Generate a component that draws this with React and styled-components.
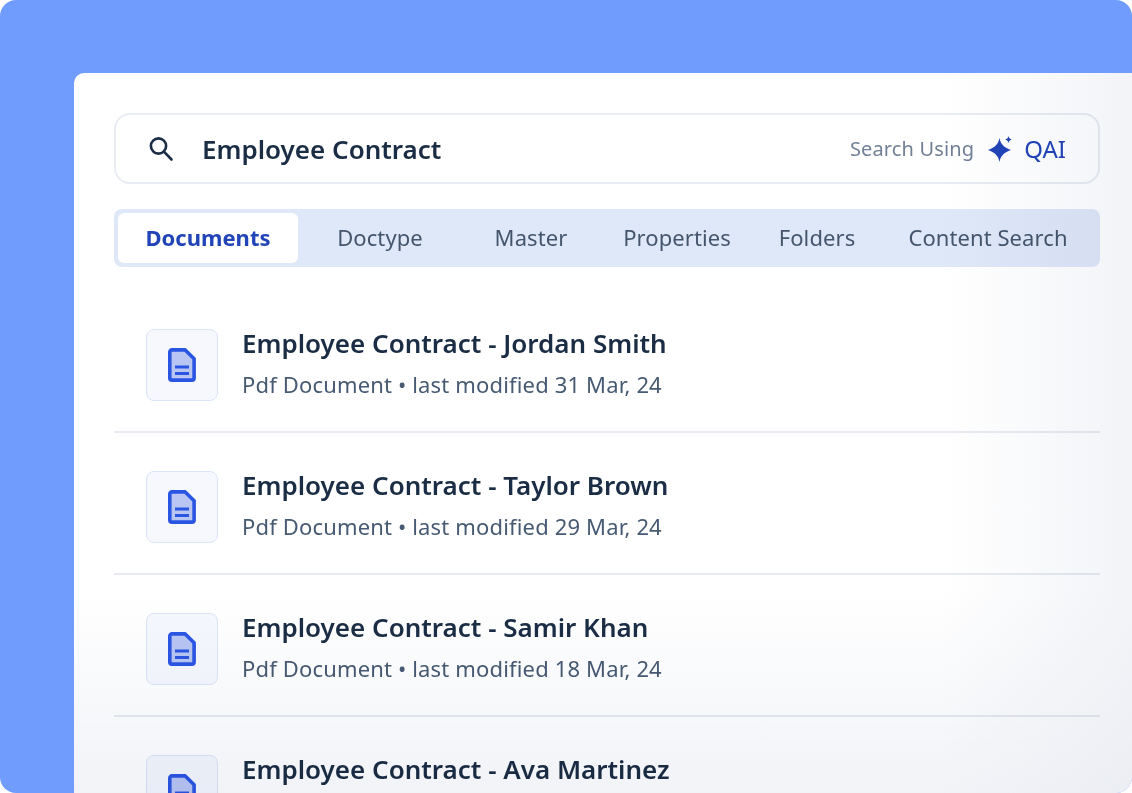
import React from 'react';
import styled, { createGlobalStyle } from 'styled-components';

const GlobalStyle = createGlobalStyle`
  html, body {
    margin: 0;
    padding: 0;
    background: #ffffff;
    overflow: hidden;
  }
  * {
    box-sizing: border-box;
  }
`;

const Backdrop = styled.div`
  width: 1132px;
  height: 793px;
  padding: 73px 0 0 74px;
  background: #709dfd;
  border-radius: 16px;
  overflow: hidden;
  font-family: 'Noto Sans', sans-serif;
`;

const Panel = styled.div`
  position: relative;
  height: 720px;
  padding: 40px 32px 0 40px;
  background: #ffffff;
  border-radius: 10px 0 0 0;
  overflow: hidden;

  /* soft grey fade along the right and bottom edges, multiplied so text stays dark */
  &::after {
    content: '';
    position: absolute;
    inset: 0;
    pointer-events: none;
    mix-blend-mode: multiply;
    background:
      linear-gradient(to right, rgba(230, 233, 240, 0) 82%, rgba(230, 233, 240, 0.5) 100%),
      linear-gradient(to bottom, rgba(230, 233, 240, 0) 72%, rgba(230, 233, 240, 0.55) 100%);
  }
`;

const SearchBar = styled.div`
  display: flex;
  align-items: center;
  height: 71px;
  padding: 0 32px;
  border: 2px solid #e9ecf2;
  border-radius: 16px;
`;

const Query = styled.span`
  flex: 1;
  margin-left: 28px;
  font-size: 26px;
  font-weight: 600;
  color: #1a2d44;
`;

const SearchUsing = styled.span`
  font-size: 20px;
  letter-spacing: 0.15px;
  color: #718096;
`;

const Sparkle = styled.svg`
  margin: 0 12px 0 14px;
`;

const Qai = styled.span`
  font-size: 24px;
  color: #2144b8;
`;

const Tabs = styled.div`
  display: flex;
  height: 58px;
  margin-top: 25px;
  padding: 4px;
  border-radius: 8px;
  background: #dfe8f8;
`;

const Tab = styled.div`
  display: flex;
  align-items: center;
  justify-content: center;
  flex: 0 0 ${(p) => p.$width}px;
  padding-bottom: 2px;
  border-radius: 6px;
  font-size: 22px;
  letter-spacing: ${(p) => (p.$active ? '0' : '0.08px')};
  font-weight: ${(p) => (p.$active ? 700 : 400)};
  color: ${(p) => (p.$active ? '#2144b8' : '#44556d')};
  background: ${(p) => (p.$active ? '#ffffff' : 'transparent')};
`;

const List = styled.div`
  margin-top: 24px;
`;

const Row = styled.div`
  display: flex;
  align-items: flex-start;
  height: 142px;
  padding: 38px 32px 0;
  border-bottom: 2px solid #e8ebf1;
`;

const IconBox = styled.div`
  display: flex;
  align-items: center;
  justify-content: center;
  flex: 0 0 72px;
  height: 72px;
  border: 1px solid #dbe5f8;
  border-radius: 8px;
  background: #f6f8fe;
`;

const RowText = styled.div`
  margin-left: 24px;
`;

const Title = styled.div`
  margin-top: -4px;
  font-size: 26px;
  line-height: 36px;
  font-weight: 600;
  color: #1a2d44;
`;

const Meta = styled.div`
  margin-top: 8px;
  font-size: 22px;
  line-height: 30px;
  font-weight: 420;
  letter-spacing: 0.16px;
  color: #475a73;
`;

const SearchIcon = () => (
  <svg width="26" height="26" viewBox="0 0 26 26" fill="none" stroke="#1a2d44" strokeWidth="2.6" strokeLinecap="round">
    <circle cx="10.5" cy="10" r="7.6" />
    <path d="M16.2 15.8 L23.5 23.5" />
  </svg>
);

const SparkleIcon = () => (
  <Sparkle width="24" height="26" viewBox="0 0 24 26" fill="#2144b8">
    <path d="M11.5 2 C12.8 8.4 15.6 11.2 23 14 C15.6 16.8 12.8 19.6 11.5 26 C10.2 19.6 7.4 16.8 0 14 C7.4 11.2 10.2 8.4 11.5 2 Z" />
    <path d="M20.5 0 C20.9 2 21.7 2.8 24 3.6 C21.7 4.4 20.9 5.2 20.5 7.2 C20.1 5.2 19.3 4.4 17 3.6 C19.3 2.8 20.1 2 20.5 0 Z" />
  </Sparkle>
);

const DocIcon = () => (
  <svg width="28" height="34" viewBox="0 0 28 34">
    <path
      d="M4 1.9 H17.2 L26.1 10.8 V29.9 A2.2 2.2 0 0 1 23.9 32.1 H4 A2.2 2.2 0 0 1 1.8 29.9 V4.1 A2.2 2.2 0 0 1 4 1.9 Z"
      fill="#b9c6f4"
      stroke="#2a55e3"
      strokeWidth="3.6"
      strokeLinejoin="round"
    />
    <path d="M7 19 H21 M7 25.4 H21" stroke="#2a55e3" strokeWidth="3" />
  </svg>
);

const tabs = [
  { label: 'Documents', width: 180, active: true },
  { label: 'Doctype', width: 164 },
  { label: 'Master', width: 138 },
  { label: 'Properties', width: 154 },
  { label: 'Folders', width: 126 },
  { label: 'Content Search', width: 216 },
];

// the last row runs off the bottom of the picture, only its title shows
const results = [
  { name: 'Jordan Smith', date: '31 Mar, 24' },
  { name: 'Taylor Brown', date: '29 Mar, 24' },
  { name: 'Samir Khan', date: '18 Mar, 24' },
  { name: 'Ava Martinez' },
];

export default function App() {
  return (
    <>
      <GlobalStyle />
      <Backdrop>
        <Panel>
          <SearchBar>
            <SearchIcon />
            <Query>Employee Contract</Query>
            <SearchUsing>Search Using</SearchUsing>
            <SparkleIcon />
            <Qai>QAI</Qai>
          </SearchBar>
          <Tabs>
            {tabs.map((tab) => (
              <Tab key={tab.label} $width={tab.width} $active={tab.active}>
                {tab.label}
              </Tab>
            ))}
          </Tabs>
          <List>
            {results.map((r) => (
              <Row key={r.name}>
                <IconBox>
                  <DocIcon />
                </IconBox>
                <RowText>
                  <Title>Employee Contract - {r.name}</Title>
                  {r.date && <Meta>Pdf Document • last modified {r.date}</Meta>}
                </RowText>
              </Row>
            ))}
          </List>
        </Panel>
      </Backdrop>
    </>
  );
}
